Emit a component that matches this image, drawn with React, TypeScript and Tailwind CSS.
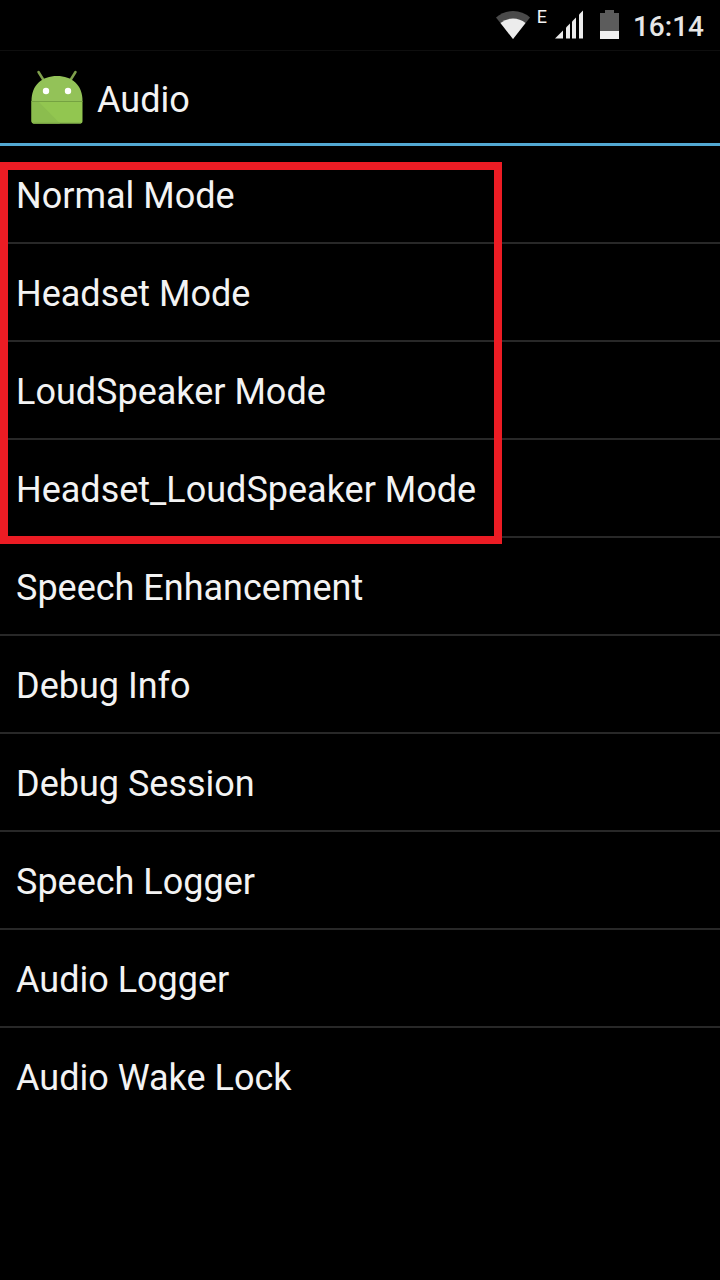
const items = [
  'Normal Mode',
  'Headset Mode',
  'LoudSpeaker Mode',
  'Headset_LoudSpeaker Mode',
  'Speech Enhancement',
  'Debug Info',
  'Debug Session',
  'Speech Logger',
  'Audio Logger',
  'Audio Wake Lock',
];

function WifiIcon() {
  return (
    <svg width="36" height="30" viewBox="0 0 36 30" aria-hidden="true">
      <path d="M18 29 L1 7.5 Q8 1 18 1 Q28 1 35 7.5 Z" fill="#4a4a4a" />
      <path d="M18 29 L5.5 13 Q11 8.5 18 8.5 Q25 8.5 30.5 13 Z" fill="#ececec" />
    </svg>
  );
}

function SignalIcon() {
  return (
    <svg width="30" height="30" viewBox="0 0 30 30" fill="#ececec" aria-hidden="true">
      <path d="M0 28.5 L8 20.5 V28.5 Z" />
      <path d="M11 17.5 L15 13.5 V28.5 H11 Z" />
      <path d="M17 11.5 L21 7.5 V28.5 H17 Z" />
      <path d="M24 4.5 L28 .5 V28.5 H24 Z" />
    </svg>
  );
}

function BatteryIcon() {
  return (
    <svg width="20" height="30" viewBox="0 0 20 30" aria-hidden="true">
      <path d="M5 0 H14 V3 H19 V21 H0 V3 H5 Z" fill="#5c5c5c" />
      <path d="M0 21 H19 V29 H0 Z" fill="#f0f0f0" />
    </svg>
  );
}

function AndroidIcon() {
  return (
    <svg width="52" height="54" viewBox="0 0 52 54" aria-hidden="true">
      <path d="M7.5 2 L12.5 10 M44.5 2 L39.5 10" stroke="#7f9f4c" strokeWidth="2.5" strokeLinecap="round" />
      <path d="M.5 31 C.5 15 11 6 26 6 C41 6 51.5 15 51.5 31 Z" fill="#93c258" />
      <path d="M.5 31 H51.5 V51 Q51.5 53.5 49 53.5 H3 Q.5 53.5 .5 51 Z" fill="#92c650" />
      <path d="M.5 31 H7 L29 53.5 H3 Q.5 53.5 .5 51 Z" fill="#8bbd4e" />
      <path d="M.5 31.5 H51.5" stroke="#75a241" />
      <path d="M2 53 H50" stroke="#7fab48" />
      <circle cx="15" cy="21" r="3.2" fill="#fff" />
      <circle cx="37" cy="21" r="3.2" fill="#fff" />
    </svg>
  );
}

export default function App() {
  return (
    <div className="min-h-screen bg-black font-[Roboto,sans-serif] text-[#f3f3f3]">
      <div className="flex h-[50px] items-center justify-end pr-4">
        <WifiIcon />
        <span className="mr-2 ml-1.5 self-start pt-2 text-[18px] leading-[18px]">E</span>
        <SignalIcon />
        <span className="mr-[13px] ml-[15px]">
          <BatteryIcon />
        </span>
        <span className="pt-1 text-[28px] leading-8 font-medium text-[#e6e6e6]">16:14</span>
      </div>

      <header className="flex h-24 items-center gap-[14px] border-t border-b-3 border-t-[#0e0e0e] border-b-[#52a8d2] px-[31px]">
        <AndroidIcon />
        <h1 className="pt-1.5 text-[36px] leading-[44px]">Audio</h1>
      </header>

      <main className="relative">
        <ul className="divide-y-2 divide-[#282828]">
          {items.map((item) => (
            <li key={item}>
              <button type="button" className="flex h-24 w-full items-center px-4 pt-1 text-left text-[36px] leading-[44px]">
                {item}
              </button>
            </li>
          ))}
        </ul>
        {/* highlights the four mode entries */}
        <div className="pointer-events-none absolute top-4 left-0 h-[382px] w-[502px] border-8 border-[#ec1c24]" />
      </main>
    </div>
  );
}
